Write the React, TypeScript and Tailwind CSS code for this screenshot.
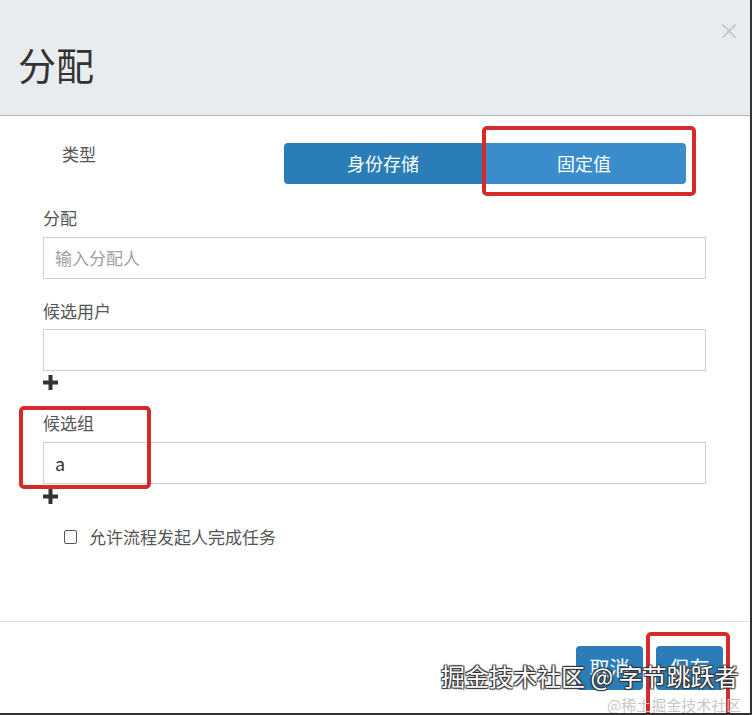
import React from "react";

const font = { fontFamily: '"Noto Sans CJK SC", "Noto Sans", sans-serif' };

function Plus() {
  return (
    <svg width="15" height="15" viewBox="0 0 15 15" className="block">
      <rect x="5.5" y="0" width="4" height="15" fill="#333" />
      <rect x="0" y="5.5" width="15" height="4" fill="#333" />
    </svg>
  );
}

export default function App() {
  return (
    <div
      className="relative w-[752px] h-[715px] bg-white border-r-2 border-b-2 border-[#333] overflow-hidden flex flex-col"
      style={font}
    >
      {/* header */}
      <div className="relative h-[116px] shrink-0 bg-[#e8ecef] border-b border-[#b3b3b3] flex items-center pl-[18px]">
        <h1 className="text-[38px] leading-none text-[#333] font-normal mt-[12px]">分配</h1>
        <span className="absolute right-[10px] top-[18px] text-[22px] leading-none text-[#c4c4c4]">×</span>
      </div>

      {/* body */}
      <div className="flex-1 flex flex-col">
        <div className="flex items-start h-[68px] pt-[27px]">
          <div className="w-[284px] pl-[62px] pt-[2px] text-[17px] leading-none text-[#555]">类型</div>
          <div className="flex w-[402px] h-[41px] rounded-[4px] overflow-hidden text-white text-[18px]">
            <div className="w-[198px] bg-[#2b7db7] flex items-center justify-center">身份存储</div>
            <div className="flex-1 bg-[#3a8ccb] flex items-center justify-center">固定值</div>
          </div>
        </div>

        <div className="pl-[43px] pr-[44px] flex flex-col">
          <label className="text-[17px] leading-none text-[#555] mt-[25px]">分配</label>
          <div className="mt-[11px] h-[42px] border border-[#cfcfcf] flex items-center pl-[11px] text-[17px] text-[#a0a0a0]">
            输入分配人
          </div>

          <label className="text-[17px] leading-none text-[#555] mt-[23px]">候选用户</label>
          <div className="mt-[10px] h-[42px] border border-[#cfcfcf]" />
          <div className="mt-[4px] h-[15px]">
            <Plus />
          </div>

          <label className="text-[17px] leading-none text-[#555] mt-[24px]">候选组</label>
          <div className="mt-[11px] h-[42px] border border-[#cfcfcf] flex items-center pl-[11px] text-[18px] text-[#333]">
            a
          </div>
          <div className="mt-[5px] h-[15px]">
            <Plus />
          </div>

          <div className="flex items-center mt-[24px] pl-[21px] gap-[12px]">
            <span className="w-[13px] h-[14px] border border-[#555] rounded-[2px] bg-white" />
            <span className="text-[17px] leading-none text-[#555]">允许流程发起人完成任务</span>
          </div>
        </div>
      </div>

      {/* footer */}
      <div className="h-[92px] shrink-0 border-t border-[#e2e2e2] flex justify-end items-start pt-[24px] pr-[27px] gap-[13px]">
        <div className="w-[67px] h-[44px] rounded-[4px] bg-[#2b7db7] text-white text-[20px] flex items-center justify-center">
          取消
        </div>
        <div className="w-[67px] h-[44px] rounded-[4px] bg-[#2b7db7] text-white text-[20px] flex items-center justify-center">
          保存
        </div>
      </div>

      {/* red annotation boxes */}
      <div className="absolute left-[482px] top-[126px] w-[214px] h-[70px] border-4 border-[#d42a2a] rounded-[5px]" />
      <div className="absolute left-[19px] top-[406px] w-[132px] h-[83px] border-4 border-[#d42a2a] rounded-[5px]" />
      <div className="absolute left-[646px] top-[632px] w-[84px] h-[90px] border-4 border-[#d42a2a] rounded-[5px]" />

      {/* watermark */}
      <div
        className="absolute left-[441px] top-[664px] text-[24px] leading-none text-white whitespace-nowrap"
        style={{ textShadow: "1px 1px 1px #333, -1px -1px 1px #333, 1px -1px 1px #333, -1px 1px 1px #333" }}
      >
        掘金技术社区 @ 字节跳跃者
      </div>
      <div className="absolute left-[607px] top-[697px] text-[15px] leading-none text-[#c8c8c8] whitespace-nowrap">
        @稀土掘金技术社区
      </div>
    </div>
  );
}
